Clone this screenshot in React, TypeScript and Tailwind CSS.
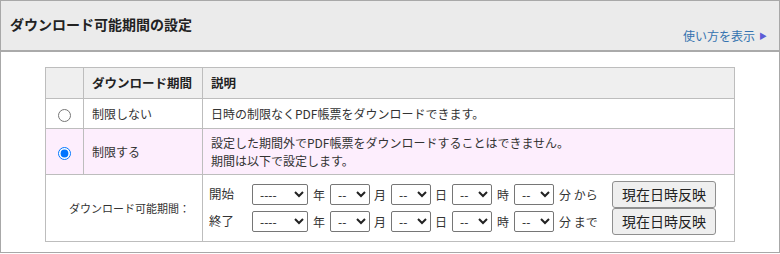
import React from 'react';

const font = { fontFamily: '"Noto Sans CJK JP", "Noto Sans", sans-serif' };

const Sel = ({ value, w }: { value: string; w: string }) => (
  <select
    defaultValue={value}
    className={`${w} h-[21px] rounded-[2px] border border-[#767676] bg-white pl-[3px] text-[12px] text-[#222]`}
  >
    <option>{value}</option>
  </select>
);

const DateRow = ({ label, suffix }: { label: string; suffix: string }) => (
  <div className="flex h-[27px] items-center text-[12px] text-[#333]">
    <span className="w-[43px] text-[12.5px]">{label}</span>
    <Sel value="----" w="w-[56px]" />
    <span className="mx-[5px]">年</span>
    <Sel value="--" w="w-[40px]" />
    <span className="ml-[4px] mr-[5px]">月</span>
    <Sel value="--" w="w-[40px]" />
    <span className="ml-[4px] mr-[5px]">日</span>
    <Sel value="--" w="w-[40px]" />
    <span className="ml-[5px] mr-[5px]">時</span>
    <Sel value="--" w="w-[40px]" />
    <span className="ml-[5px]">分 {suffix}</span>
    <button className="ml-auto mr-[18px] h-[27px] w-[104px] rounded-[3px] border border-[#8f8f8f] bg-[#efefef] text-[14px] text-[#222]">
      現在日時反映
    </button>
  </div>
);

export default function App() {
  return (
    <div className="h-[254px] w-[780px] bg-white" style={font}>
      <div className="h-[253px] border border-[#a8a8a8]">
        <div className="flex h-[51px] items-start justify-between border-b-2 border-[#aaa] bg-[#ebebeb] px-[9px]">
          <h1 className="mt-[13px] text-[14px] font-bold text-[#222]">ダウンロード可能期間の設定</h1>
          <a className="mt-[26px] mr-[3px] flex items-center gap-[4px] text-[12px] text-[#3573b0]">
            使い方を表示<span className="text-[8px] text-[#5c5cd6]">▶</span>
          </a>
        </div>

        <div className="pl-[44px] pt-[15px]">
          <table className="w-[690px] table-fixed border-collapse text-[12px] text-[#333]">
            <colgroup>
              <col className="w-[38px]" />
              <col className="w-[119px]" />
              <col />
            </colgroup>
            <thead>
              <tr className="h-[31px] bg-[#efefef] text-left text-[12.5px] font-bold text-[#222]">
                <th className="border border-[#bdbdbd]"></th>
                <th className="whitespace-nowrap border border-[#bdbdbd] px-[8px]">ダウンロード期間</th>
                <th className="border border-[#bdbdbd] px-[8px]">説明</th>
              </tr>
            </thead>
            <tbody>
              <tr className="h-[30px]">
                <td className="border border-[#bdbdbd] text-center">
                  <input type="radio" name="dl" className="h-[13px] w-[13px] align-middle" />
                </td>
                <td className="border border-[#bdbdbd] px-[8px]">制限しない</td>
                <td className="border border-[#bdbdbd] px-[8px]">日時の制限なくPDF帳票をダウンロードできます。</td>
              </tr>
              <tr className="h-[46px] bg-[#fdeefd]">
                <td className="border border-[#bdbdbd] text-center">
                  <input type="radio" name="dl" defaultChecked className="h-[13px] w-[13px] align-middle" />
                </td>
                <td className="border border-[#bdbdbd] px-[8px]">制限する</td>
                <td className="border border-[#bdbdbd] px-[8px] leading-[18px]">
                  設定した期間外でPDF帳票をダウンロードすることはできません。
                  <br />
                  期間は以下で設定します。
                </td>
              </tr>
              <tr className="h-[67px]">
                <td colSpan={2} className="whitespace-nowrap border border-[#bdbdbd] pr-[12px] text-right text-[11px]">
                  ダウンロード可能期間：
                </td>
                <td className="border border-[#bdbdbd] py-[5px] pl-[6px]">
                  <DateRow label="開始" suffix="から" />
                  <DateRow label="終了" suffix="まで" />
                </td>
              </tr>
            </tbody>
          </table>
        </div>
      </div>
    </div>
  );
}
